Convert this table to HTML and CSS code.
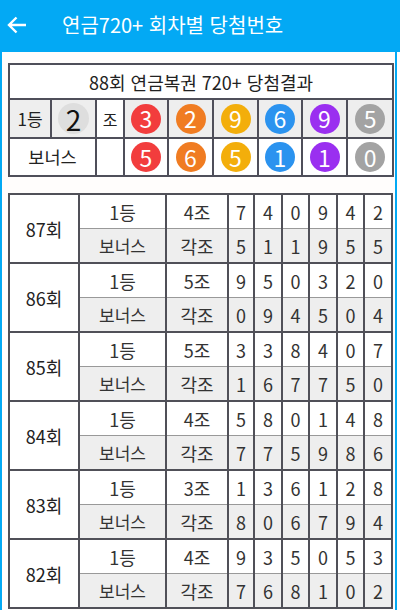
FILE: index.html
```html
<!DOCTYPE html>
<html lang="ko">
<head>
<meta charset="utf-8">
<link rel="stylesheet" href="styles.css">
</head>
<body>
<header class="appbar">
  <svg class="back" width="20" height="18" viewBox="0 0 20 18"><path d="M19 9H2.5M9.5 1.5L2 9l7.5 7.5" fill="none" stroke="#fff" stroke-width="2.4"/></svg>
  <span class="title">연금720+ 회차별 당첨번호</span>
</header>
<main class="frame">
  <table class="latest">
    <colgroup><col style="width:42px"><col style="width:45px"><col style="width:28px"><col style="width:44px"><col style="width:45px"><col style="width:45px"><col style="width:44px"><col style="width:45px"><col style="width:46px"></colgroup>
    <tr class="ttl"><td colspan="9">88회 연금복권 720+ 당첨결과</td></tr>
    <tr class="r1">
      <td class="g">1등</td>
      <td class="g"><span class="grp">2</span></td>
      <td class="jo">조</td>
      <td class="g"><span class="ball red">3</span></td>
      <td class="g"><span class="ball orange">2</span></td>
      <td class="g"><span class="ball yellow">9</span></td>
      <td class="g"><span class="ball blue">6</span></td>
      <td class="g"><span class="ball purple">9</span></td>
      <td class="g"><span class="ball gray">5</span></td>
    </tr>
    <tr class="r2">
      <td colspan="2" class="bn">보너스</td>
      <td></td>
      <td><span class="ball red">5</span></td>
      <td><span class="ball orange">6</span></td>
      <td><span class="ball yellow">5</span></td>
      <td><span class="ball blue">1</span></td>
      <td><span class="ball purple">1</span></td>
      <td><span class="ball gray">0</span></td>
    </tr>
  </table>

  <table class="hist">
    <colgroup><col style="width:70px"><col style="width:87px"><col style="width:62px"><col style="width:26px"><col style="width:28px"><col style="width:27px"><col style="width:28px"><col style="width:27px"><col style="width:28px"></colgroup>
    <tbody id="rows"></tbody>
  </table>
</main>
<script src="app.js"></script>
</body>
</html>
```
FILE: app.js
```js
const data = [
  ["87회","4조","740942","511955"],
  ["86회","5조","950320","094504"],
  ["85회","5조","338407","167750"],
  ["84회","4조","580148","775986"],
  ["83회","3조","136128","806794"],
  ["82회","4조","935053","768102"]
];
const tb = document.getElementById("rows");
let html = "";
for (const [r, g, a, b] of data) {
  html += `<tr class="top"><td rowspan="2" class="rnd">${r}</td><td>1등</td><td>${g}</td>${[...a].map(d=>`<td>${d}</td>`).join("")}</tr>`;
  html += `<tr class="bon"><td>보너스</td><td>각조</td>${[...b].map(d=>`<td>${d}</td>`).join("")}</tr>`;
}
tb.innerHTML = html;
```
FILE: styles.css
```css
html, body { margin: 0; padding: 0; }
body {
  width: 400px;
  height: 610px;
  overflow: hidden;
  font-family: "Noto Sans CJK KR", "Noto Sans", sans-serif;
  color: #222;
  background: #fff;
}
.appbar {
  height: 52px;
  background: #03a9f4;
  display: flex;
  align-items: center;
  padding-left: 7px;
  gap: 35px;
}
.back { display: block; margin-top: -2px; }
.title {
  color: #fff;
  font-size: 20px;
  margin-top: -3px;
}
.frame {
  border-left: 2px solid #03a9f4;
  border-right: 2px solid #03a9f4;
  padding: 11px 0 20px 6px;
  width: 387px;
  height: 558px;
  box-sizing: border-box;
  box-sizing: content-box;
  background: #fffdfc;
}
table {
  border-collapse: collapse;
  table-layout: fixed;
  width: 384px;
  background: #fff;
}
td {
  border: 2px solid #555;
  text-align: center;
  padding: 0;
  line-height: 1;
}
.latest td { border-color: #4f4f5a; }
.latest .ttl td { height: 33px; font-size: 18px; }
.latest .r1 td { height: 37px; font-size: 17px; }
.latest .r2 td { height: 36px; font-size: 17.5px; }
.latest .g { background: #eeeeee; }
.grp {
  display: inline-flex;
  width: 31px; height: 31px;
  border-radius: 50%;
  background: #dedede;
  color: #111;
  font-size: 28px;
  align-items: center;
  justify-content: center;
}
.jo { font-size: 16px !important; }
.ball {
  display: inline-flex;
  width: 30px; height: 30px;
  border-radius: 50%;
  color: #fff;
  font-size: 23px;
  align-items: center;
  justify-content: center;
  vertical-align: middle;
}
.red { background: #f23d3d; }
.orange { background: #f07c22; }
.yellow { background: #f3ae0b; }
.blue { background: #2b93ef; }
.purple { background: #9a2ff0; }
.gray { background: #a3a3a3; }

.hist { margin-top: 16px; }
.hist td {
  height: 33px;
  font-size: 18px;
  color: #333;
  border-color: #505058;
}
.hist .top td { border-bottom: 1px solid #999; }
.hist .bon td { border-top: 1px solid #999; background: #eeeeee; }
.hist .top td.rnd { background: #fff; border-bottom: 2px solid #505058; color: #222; }
.hist .bon td:first-child { font-size: 17px; }
```
